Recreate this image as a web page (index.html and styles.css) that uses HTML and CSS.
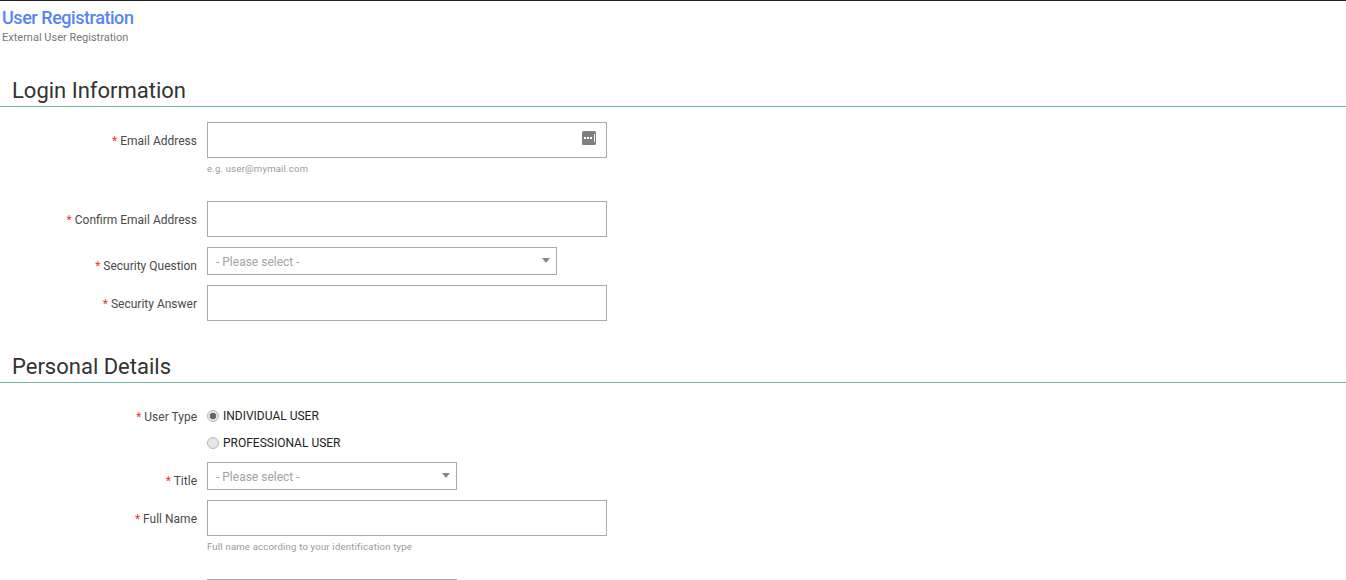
FILE: index.html
```html
<!DOCTYPE html>
<html lang="en">
<head>
<meta charset="utf-8">
<title>User Registration</title>
<link rel="stylesheet" href="styles.css">
</head>
<body>
<header class="page-head">
  <h1 class="page-title">User Registration</h1>
  <p class="page-sub">External User Registration</p>
</header>
<main>
  <section class="login">
    <h2 class="section-title">Login Information</h2>
    <div class="row row-email">
      <label class="label"><span class="req">*</span> Email Address</label>
      <div class="field">
        <div class="input">
          <svg class="key-icon" width="14" height="14" viewBox="0 0 14 14"><rect x="0" y="0" width="14" height="14" rx="1.5" fill="#808080"/><rect x="2" y="6" width="2" height="2" fill="#fff"/><rect x="5" y="6" width="2" height="2" fill="#fff"/><rect x="8" y="6" width="2" height="2" fill="#fff"/><rect x="12" y="3" width="1" height="8" fill="#f0f0f0"/></svg>
        </div>
        <p class="hint">e.g. user@mymail.com</p>
      </div>
    </div>
    <div class="row row-confirm">
      <label class="label"><span class="req">*</span> Confirm Email Address</label>
      <div class="field"><div class="input"></div></div>
    </div>
    <div class="row row-select">
      <label class="label label-select"><span class="req">*</span> Security Question</label>
      <div class="field"><div class="select select-wide"><span>- Please select -</span><i class="caret"></i></div></div>
    </div>
    <div class="row row-answer">
      <label class="label"><span class="req">*</span> Security Answer</label>
      <div class="field"><div class="input"></div></div>
    </div>
  </section>
  <section class="personal">
    <h2 class="section-title">Personal Details</h2>
    <div class="row row-type">
      <label class="label label-type"><span class="req">*</span> User Type</label>
      <div class="field radios">
        <div class="radio-line"><i class="radio radio-on"></i><span>INDIVIDUAL USER</span></div>
        <div class="radio-line"><i class="radio"></i><span>PROFESSIONAL USER</span></div>
      </div>
    </div>
    <div class="row row-title">
      <label class="label label-select"><span class="req">*</span> Title</label>
      <div class="field"><div class="select select-narrow"><span>- Please select -</span><i class="caret"></i></div></div>
    </div>
    <div class="row row-name">
      <label class="label"><span class="req">*</span> Full Name</label>
      <div class="field">
        <div class="input"></div>
        <p class="hint">Full name according to your identification type</p>
      </div>
    </div>
    <div class="row row-last">
      <div class="label"></div>
      <div class="field"><div class="select select-narrow"></div></div>
    </div>
  </section>
</main>
</body>
</html>
```

FILE: styles.css
```css
* { box-sizing: border-box; }
html, body { margin: 0; padding: 0; height: 580px; overflow: hidden; }
body {
  border-top: 1px solid #222;
  background: #fff;
  font-family: Roboto, "Liberation Sans", sans-serif;
  font-size: 12px;
  color: #333;
}
.page-head { padding: 8px 0 0 2px; height: 62px; }
.page-title { margin: 0; font-size: 18px; line-height: 18px; font-weight: 500; color: #5585f5; letter-spacing: -0.45px; }
.page-sub { margin: 4px 0 0; font-size: 11px; line-height: 13px; color: #777; }
.section-title {
  margin: 0;
  height: 44px;
  padding: 15px 0 0 12px;
  border-bottom: 1px solid #76b5ad;
  font-size: 22px;
  line-height: 26px;
  font-weight: 400;
  color: #333;
}
.row { display: flex; align-items: flex-start; }
.label { width: 197px; margin-right: 10px; flex: none; text-align: right; font-size: 12px; line-height: 14px; color: #4a4a4a; padding-top: 12px; }
.label-select { padding-top: 12px; }
.label-type { padding-top: 1px; }
.req { color: #e53935; }
.field { flex: none; }
.input { position: relative; width: 400px; height: 36px; border: 1px solid #aaa; background: #fff; }
.key-icon { position: absolute; right: 10px; top: 8px; display: block; }
.hint { margin: 5px 0 0; font-size: 9.5px; line-height: 12px; color: #999; letter-spacing: 0.22px; }
.select { position: relative; display: flex; align-items: center; height: 28px; border: 1px solid #aaa; padding: 2px 0 0 8px; font-size: 12px; color: #a3a3a3; }
.select-wide { width: 350px; }
.select-narrow { width: 250px; }
.caret { position: absolute; right: 6px; top: 10px; border-left: 4.5px solid transparent; border-right: 4.5px solid transparent; border-top: 5px solid #888; }
.row-email { margin-top: 15px; }
.row-confirm { margin-top: 26px; }
.row-select { margin-top: 10px; }
.row-answer { margin-top: 10px; }
.personal { margin-top: 18px; }
.row-type { margin-top: 26px; }
.radios { display: flex; flex-direction: column; gap: 13px; }
.radio-line { display: flex; align-items: center; gap: 4px; height: 14px; font-size: 12px; line-height: 14px; color: #222; }
.radio { display: block; width: 12px; height: 12px; border-radius: 50%; border: 1px solid #b5b5b5; background: #e6e6e6; }
.radio-on { background: radial-gradient(circle, #666 0 3px, #e6e6e6 3.6px); }
.row-title { margin-top: 12px; }
.row-name { margin-top: 10px; }
.row-last { margin-top: 26px; }
```
